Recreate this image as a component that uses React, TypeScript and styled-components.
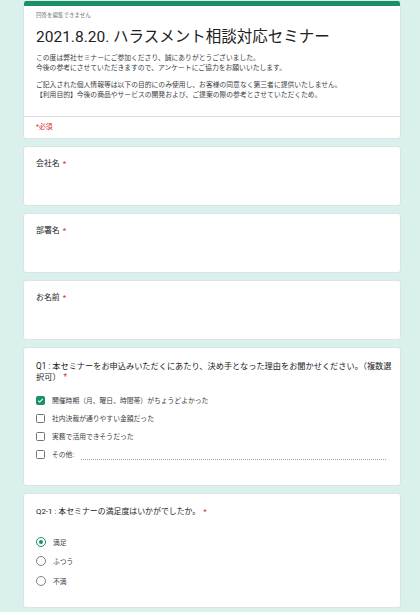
import React from 'react'
import styled, { createGlobalStyle } from 'styled-components'

const Global = createGlobalStyle`
  html, body {
    margin: 0;
    padding: 0;
    background: #d9f0ec;
    font-family: Roboto, "Noto Sans CJK JP", sans-serif;
    color: #202124;
  }
`

const Page = styled.div`
  width: 378px;
  margin-left: 23px;
  padding-top: 1px;
  display: flex;
  flex-direction: column;
  gap: 7px;
`

const Card = styled.div<{ $h?: number }>`
  background: #fff;
  border: 1px solid #dde3e2;
  border-radius: 3px;
  box-sizing: border-box;
  overflow: hidden;
  ${p => (p.$h ? `height: ${p.$h}px;` : '')}
`

const HeaderCard = styled(Card)`
  border-top: none;
`

const GreenBar = styled.div`
  height: 5px;
  background: #1a9067;
`

const HeaderBody = styled.div`
  padding: 5px 12px 16px;
`

const Note = styled.div`
  font-size: 5.5px;
  line-height: 8px;
  color: #70757a;
`

const Title = styled.h1`
  margin: 8px 0 0;
  font-size: 15.5px;
  line-height: 20px;
  font-weight: 400;
  color: #202124;
`

const Desc = styled.p`
  margin: 6px 0 0;
  font-size: 6.8px;
  line-height: 10px;
  color: #3c4043;
  & + & {
    margin-top: 7px;
  }
`

const Divider = styled.div`
  border-top: 1px solid #dadce0;
`

const Required = styled.div`
  padding: 5px 12px 6px;
  font-size: 6.8px;
  line-height: 10px;
  color: #d93025;
`

const QBody = styled.div<{ $pt: number }>`
  padding: ${p => p.$pt}px 4px 0 12px;
`

const Label = styled.div<{ $lh?: number; $fs?: number }>`
  font-size: ${p => p.$fs ?? 7.9}px;
  line-height: ${p => p.$lh ?? 10}px;
  color: #202124;
`

const Star = styled.span`
  color: #d93025;
  margin-left: 3px;
`

const Options = styled.div<{ $mt: number; $rh: number }>`
  margin-top: ${p => p.$mt}px;
  padding-right: 10px;
  display: flex;
  flex-direction: column;
  & > * {
    height: ${p => p.$rh}px;
  }
`

const Row = styled.div`
  display: flex;
  align-items: center;
  gap: 7px;
`

const OptText = styled.span`
  font-size: 6.8px;
  color: #3c4043;
  white-space: nowrap;
`

const Box = styled.span<{ $on?: boolean }>`
  width: 9px;
  height: 9px;
  box-sizing: border-box;
  border-radius: 1.5px;
  border: 1px solid ${p => (p.$on ? '#1a9067' : '#6f7378')};
  background: ${p => (p.$on ? '#1a9067' : '#fff')};
  display: flex;
  align-items: center;
  justify-content: center;
  flex: none;
`

const Radio = styled.span<{ $on?: boolean }>`
  width: 10px;
  height: 10px;
  box-sizing: border-box;
  border-radius: 50%;
  border: 1px solid ${p => (p.$on ? '#1a9067' : '#7d8186')};
  display: flex;
  align-items: center;
  justify-content: center;
  flex: none;
  &::after {
    content: '';
    width: 4px;
    height: 4px;
    border-radius: 50%;
    background: ${p => (p.$on ? '#1a9067' : 'transparent')};
  }
`

const OtherLine = styled.span`
  flex: 1;
  align-self: flex-end;
  margin: 0 0 3px 0;
  border-bottom: 1px dotted #9aa0a6;
`

const Check = () => (
  <svg width="7" height="7" viewBox="0 0 24 24">
    <path d="M4 12.5l5 5L20 6.5" fill="none" stroke="#fff" strokeWidth="3.5" />
  </svg>
)

const textFields = ['会社名', '部署名', 'お名前']

const q1Options = [
  { label: '開催時期（月、曜日、時間帯）がちょうどよかった', on: true },
  { label: '社内決裁が通りやすい金額だった', on: false },
  { label: '実務で活用できそうだった', on: false },
]

const q2Options = [
  { label: '満足', on: true },
  { label: 'ふつう', on: false },
  { label: '不満', on: false },
]

export default function App() {
  return (
    <>
      <Global />
      <Page>
        <HeaderCard>
          <GreenBar />
          <HeaderBody>
            <Note>回答を編集できません</Note>
            <Title>2021.8.20. ハラスメント相談対応セミナー</Title>
            <Desc>
              この度は弊社セミナーにご参加くださり、誠にありがとうございました。
              <br />
              今後の参考にさせていただきますので、アンケートにご協力をお願いいたします。
            </Desc>
            <Desc>
              ご記入された個人情報等は以下の目的にのみ使用し、お客様の同意なく第三者に提供いたしません。
              <br />
              【利用目的】今後の商品やサービスの開発および、ご提案の際の参考とさせていただくため。
            </Desc>
          </HeaderBody>
          <Divider />
          <Required>*必須</Required>
        </HeaderCard>

        {textFields.map(f => (
          <Card key={f} $h={60}>
            <QBody $pt={12}>
              <Label>
                {f}
                <Star>*</Star>
              </Label>
            </QBody>
          </Card>
        ))}

        <Card $h={139}>
          <QBody $pt={13}>
            <Label $lh={11} $fs={8.2}>
              Q1 : 本セミナーをお申込みいただくにあたり、決め手となった理由をお聞かせください。（複数選
              <br />
              択可）
              <Star>*</Star>
            </Label>
            <Options $mt={8} $rh={18}>
              {q1Options.map(o => (
                <Row key={o.label}>
                  <Box $on={o.on}>{o.on && <Check />}</Box>
                  <OptText>{o.label}</OptText>
                </Row>
              ))}
              <Row>
                <Box />
                <OptText>その他:</OptText>
                <OtherLine />
              </Row>
            </Options>
          </QBody>
        </Card>

        <Card $h={115}>
          <QBody $pt={12}>
            <Label $lh={11}>
              Q2-1 : 本セミナーの満足度はいかがでしたか。
              <Star>*</Star>
            </Label>
            <Options $mt={15} $rh={19.5}>
              {q2Options.map(o => (
                <Row key={o.label}>
                  <Radio $on={o.on} />
                  <OptText>{o.label}</OptText>
                </Row>
              ))}
            </Options>
          </QBody>
        </Card>
      </Page>
    </>
  )
}
